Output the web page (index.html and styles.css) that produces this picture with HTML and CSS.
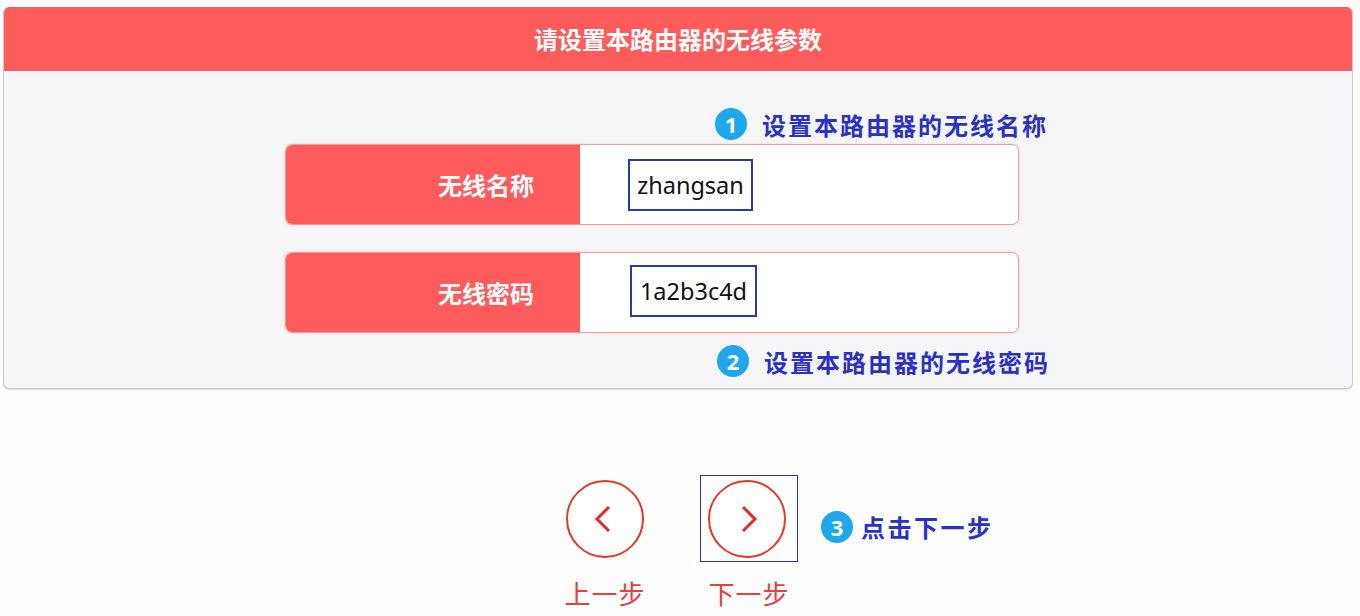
FILE: index.html
```html
<!DOCTYPE html>
<html lang="zh">
<head>
<meta charset="utf-8">
<title>无线设置</title>
<link rel="stylesheet" href="styles.css">
</head>
<body>
<div class="page">
  <section class="panel">
    <header class="panel-head">请设置本路由器的无线参数</header>
    <div class="panel-body">
      <div class="form">
        <div class="note note-top"><span class="badge">1</span><span class="note-text">设置本路由器的无线名称</span></div>
        <div class="row">
          <div class="row-label">无线名称</div>
          <div class="row-field"><span class="value-box box-name">zhangsan</span></div>
        </div>
        <div class="row row-second">
          <div class="row-label">无线密码</div>
          <div class="row-field"><span class="value-box box-pass">1a2b3c4d</span></div>
        </div>
        <div class="note note-bottom"><span class="badge">2</span><span class="note-text">设置本路由器的无线密码</span></div>
      </div>
    </div>
  </section>
  <div class="nav">
    <div class="nav-item">
      <div class="nav-frame">
        <span class="circle">
          <svg width="40" height="40" viewBox="0 0 40 40"><path d="M24 8 L12 20 L24 32" fill="none" stroke="#e32a24" stroke-width="3"/></svg>
        </span>
      </div>
      <div class="nav-label">上一步</div>
    </div>
    <div class="nav-item">
      <div class="nav-frame nav-frame-active">
        <span class="circle">
          <svg width="40" height="40" viewBox="0 0 40 40"><path d="M16 8 L28 20 L16 32" fill="none" stroke="#e32a24" stroke-width="3"/></svg>
        </span>
      </div>
      <div class="nav-label">下一步</div>
    </div>
    <div class="note note-next"><span class="badge">3</span><span class="note-text">点击下一步</span></div>
  </div>
</div>
</body>
</html>
```

FILE: styles.css
```css
* { box-sizing: border-box; }
html, body { margin: 0; padding: 0; background: #fdfdfe; }
body { font-family: "Noto Sans CJK SC", "Noto Sans", sans-serif; width: 1360px; height: 616px; overflow: hidden; }

.page { padding: 7px 7px 0 3px; }

.panel {
  width: 1350px;
  border: 1px solid #c9c9cc;
  border-top: none;
  border-radius: 6px;
  overflow: hidden;
  background: #f6f6f8;
  box-shadow: 0 1px 1px rgba(0,0,0,0.12);
}
.panel-head {
  height: 64px;
  background: #fe5c5c;
  color: #fff;
  font-weight: 700;
  font-size: 24px;
  line-height: 64px;
  text-align: center;
}
.panel-body { height: 317px; padding-left: 281px; padding-top: 37px; }
.form { width: 770px; }

.note { display: flex; align-items: center; }
.note-top { margin-left: 430px; height: 36px; margin-top: -2px; margin-bottom: 2px; }
.note-bottom { margin-left: 432px; margin-top: 10px; height: 36px; }
.badge {
  width: 32px; height: 32px; border-radius: 50%;
  background: #1ea7ea; color: #fff;
  font-family: "Noto Sans", sans-serif; font-weight: 700; font-size: 22px;
  display: flex; align-items: center; justify-content: center;
  line-height: 1;
}
.note-text {
  margin-left: 15px;
  color: #2c30c4;
  font-weight: 700;
  font-size: 24px;
  letter-spacing: 2px;
}

.row {
  width: 734px; height: 81px;
  display: flex;
  border: 1.5px solid #f39b97;
  border-radius: 7px;
  overflow: hidden;
  background: #fff;
  box-shadow: 0 0 3px rgba(240,120,110,0.25);
}
.row-second { margin-top: 27px; }
.row-label {
  width: 294px;
  background: #fe5c5c;
  color: #fff;
  font-weight: 700;
  font-size: 24px;
  display: flex; align-items: center; justify-content: flex-end;
  padding-right: 46px;
}
.row-field { flex: 1; display: flex; align-items: center; padding-left: 48px; }
.value-box {
  display: inline-flex; align-items: center; justify-content: center;
  height: 52px;
  border: 2px solid #2b3b99;
  background: #fff;
  color: #111;
  font-family: "Noto Sans", sans-serif;
  font-size: 23.5px;
}
.box-name { width: 125px; }
.box-pass { width: 127px; margin-left: 2px; margin-top: -4px; }

.nav { display: flex; align-items: flex-start; padding-left: 553px; padding-top: 86px; }
.nav-item { display: flex; flex-direction: column; align-items: center; width: 98px; }
.nav-item + .nav-item { margin-left: 46px; }
.nav-frame {
  width: 98px; height: 87px;
  display: flex; align-items: center; justify-content: center;
  border: 1.5px solid transparent;
}
.nav-frame-active { border-color: #2d3a9c; padding-right: 4px; }
.circle {
  width: 78px; height: 78px; border-radius: 50%;
  border: 2.5px solid #e4372f;
  display: flex; align-items: center; justify-content: center;
  background: #fff;
}
.nav-label {
  margin-top: 12px;
  color: #e3433c;
  font-size: 26px;
  letter-spacing: 1px;
}
.note-next { margin-left: 23px; margin-top: 34px; }
.note-next .note-text { margin-left: 8px; letter-spacing: 2.5px; }
```
